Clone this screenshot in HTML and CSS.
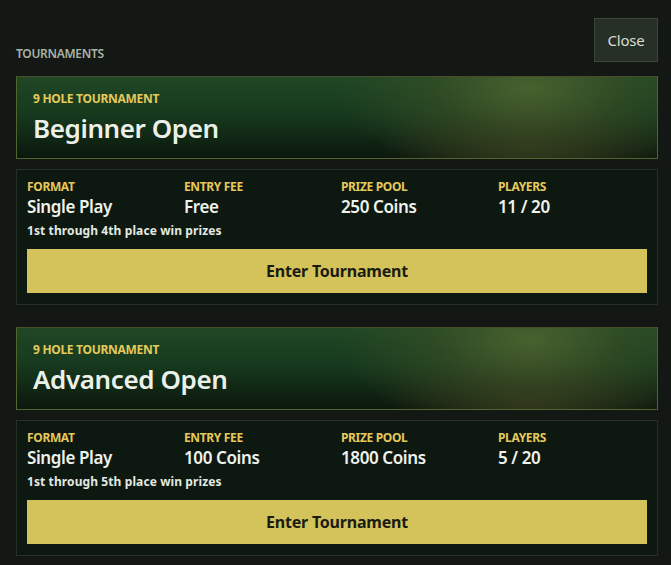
FILE: index.html
```html
<!DOCTYPE html>
<html lang="en">
<head>
<meta charset="utf-8">
<title>Tournaments</title>
<link rel="stylesheet" href="styles.css">
</head>
<body>
<div class="panel">
  <div class="topbar">
    <h2 class="section-title">TOURNAMENTS</h2>
    <button class="close-btn">Close</button>
  </div>

  <section class="tournament">
    <div class="t-header">
      <div class="t-tag">9 HOLE TOURNAMENT</div>
      <h3 class="t-name">Beginner Open</h3>
    </div>
    <div class="t-body">
      <div class="t-grid">
        <div class="stat"><div class="stat-label">FORMAT</div><div class="stat-value">Single Play</div></div>
        <div class="stat"><div class="stat-label">ENTRY FEE</div><div class="stat-value">Free</div></div>
        <div class="stat"><div class="stat-label">PRIZE POOL</div><div class="stat-value">250 Coins</div></div>
        <div class="stat"><div class="stat-label">PLAYERS</div><div class="stat-value">11 / 20</div></div>
      </div>
      <div class="t-note">1st through 4th place win prizes</div>
      <button class="enter-btn">Enter Tournament</button>
    </div>
  </section>

  <section class="tournament">
    <div class="t-header">
      <div class="t-tag">9 HOLE TOURNAMENT</div>
      <h3 class="t-name">Advanced Open</h3>
    </div>
    <div class="t-body">
      <div class="t-grid">
        <div class="stat"><div class="stat-label">FORMAT</div><div class="stat-value">Single Play</div></div>
        <div class="stat"><div class="stat-label">ENTRY FEE</div><div class="stat-value">100 Coins</div></div>
        <div class="stat"><div class="stat-label">PRIZE POOL</div><div class="stat-value">1800 Coins</div></div>
        <div class="stat"><div class="stat-label">PLAYERS</div><div class="stat-value">5 / 20</div></div>
      </div>
      <div class="t-note">1st through 5th place win prizes</div>
      <button class="enter-btn">Enter Tournament</button>
    </div>
  </section>
</div>
</body>
</html>
```

FILE: styles.css
```css
* { box-sizing: border-box; }

html, body {
  margin: 0;
  padding: 0;
  background: #131814;
  font-family: "Noto Sans", "Open Sans", "Liberation Sans", sans-serif;
  color: #e6ece4;
}

.panel {
  padding: 18px 13px 0 16px;
}

.topbar {
  display: flex;
  justify-content: space-between;
  align-items: flex-start;
  height: 58px;
}

.section-title {
  margin: 28px 0 0 0;
  font-size: 12px;
  font-weight: 600;
  letter-spacing: -0.3px;
  color: #a9b3a5;
  line-height: 16px;
}

.close-btn {
  width: 64px;
  height: 44px;
  background: #263027;
  border: 1px solid #3b463c;
  color: #d9ddd5;
  font-family: inherit;
  font-size: 15px;
  padding: 0;
  letter-spacing: -0.2px;
}

.tournament {
  margin-bottom: 22px;
}

.t-header {
  height: 83px;
  border: 1px solid #52652f;
  border-top-color: #4a4b2b;
  padding: 14px 16px 0 16px;
  background:
    radial-gradient(ellipse 190px 95px at 80% 15%, rgba(80, 102, 48, 0.85), rgba(62, 82, 38, 0.5) 50%, rgba(40, 50, 25, 0) 100%),
    radial-gradient(ellipse 150px 55px at 80% 90%, rgba(52, 50, 26, 0.75), rgba(40, 40, 20, 0) 100%),
    linear-gradient(180deg, #1f4725 0%, #173a1e 45%, #0b170d 100%);
}

.t-tag {
  font-size: 12px;
  font-weight: 700;
  color: #e5c95a;
  letter-spacing: -0.3px;
  line-height: 16px;
}

.t-name {
  margin: 6px 0 0 0;
  font-size: 26px;
  font-weight: 600;
  letter-spacing: -0.4px;
  color: #ebf1e8;
  line-height: 30px;
}

.t-body {
  margin-top: 10px;
  height: 136px;
  border: 1px solid #253126;
  background: #0d1810;
  padding: 9px 10px 0 10px;
}

.t-grid {
  display: grid;
  grid-template-columns: repeat(4, 1fr);
  gap: 8px;
}

.stat-label {
  font-size: 12px;
  font-weight: 700;
  color: #e5c95a;
  letter-spacing: -0.35px;
  line-height: 16px;
}

.stat-value {
  font-size: 17px;
  font-weight: 600;
  color: #eef2ec;
  letter-spacing: -0.4px;
  line-height: 22px;
  margin-top: 1px;
}

.t-note {
  margin-top: 4px;
  font-size: 12px;
  font-weight: 700;
  color: #e3e8e0;
  letter-spacing: 0.1px;
  line-height: 18px;
}

.enter-btn {
  display: block;
  width: 100%;
  height: 44px;
  margin-top: 9px;
  background: #d4c35b;
  border: none;
  color: #1a1c12;
  font-family: inherit;
  font-size: 16px;
  font-weight: 700;
  letter-spacing: -0.2px;
}
```
